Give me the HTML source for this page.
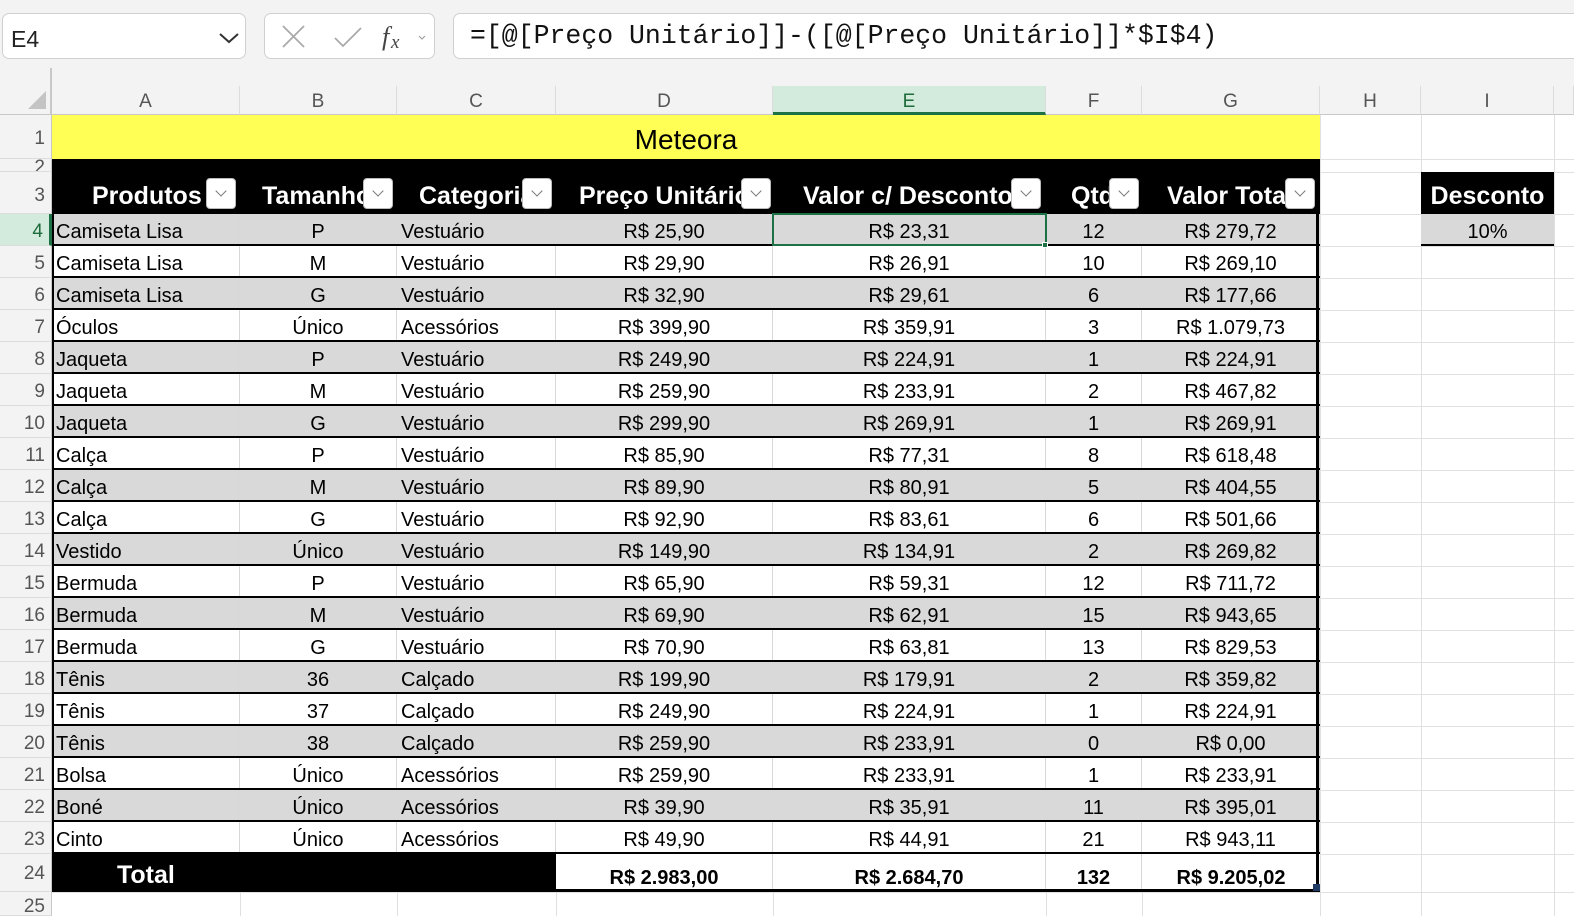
<!DOCTYPE html>
<html><head><meta charset="utf-8"><style>
*{margin:0;padding:0;box-sizing:border-box}
body{width:1574px;height:916px;background:#fff;position:relative;overflow:hidden;font-family:"Liberation Sans",sans-serif;color:#000}
.a{position:absolute}
.top{left:0;top:0;width:1574px;height:86px;background:#f3f3f3}
.box{background:#fff;border:1.5px solid #d0d0d0;border-radius:7px}
.colh{top:86px;height:29px;background:#f3f3f3;border-bottom:1px solid #c8c8c8;color:#555;font-size:19px;text-align:center;line-height:31px;border-right:1px solid #dcdcdc}
.rh{left:0;width:52px;background:#f3f3f3;color:#555;font-size:19px;text-align:right;padding-right:6px;border-bottom:1px solid #dcdcdc;border-right:1px solid #c8c8c8}
.vl{top:115px;width:1px;height:801px;background:#e0e0e0}
.hl{left:52px;width:1522px;height:1px;background:#e0e0e0}
.row{left:52px;width:1268px;height:32px;display:flex;font-size:20px;line-height:36px;border-bottom:2px solid #000}
.row div{white-space:nowrap;overflow:hidden;border-right:1px solid #d8d8d8}
.g{background:#d9d9d9}
.w{background:#fff}
.c1{width:188px;padding-left:4px}.c2{width:157px;text-align:center}.c3{width:159px;padding-left:4px}.c4{width:217px;text-align:center}.c5{width:273px;text-align:center}.c6{width:96px;text-align:center}.c7{width:178px;text-align:center}
.hd{color:#fff;font-weight:bold;font-size:25px;top:172px;height:42px;line-height:48px;white-space:nowrap;overflow:hidden;text-align:center}
.dd{top:178px;width:30px;height:31px;background:#fff;border-radius:4px;border:1px solid #bbb}
.dd:after{content:"";position:absolute;left:10px;top:8px;width:7px;height:7px;border-right:1.3px solid #777;border-bottom:1.3px solid #777;transform:rotate(45deg)}
</style></head><body>
<div class="a top"></div>
<div class="a box" style="left:2px;top:13px;width:244px;height:46px"></div>
<div class="a" style="left:11px;top:26px;font-size:23px;color:#222">E4</div>
<svg class="a" style="left:218px;top:31px" width="22" height="14"><path d="M2 3 L11 11 L20 3" fill="none" stroke="#333" stroke-width="2"/></svg>
<div class="a box" style="left:264px;top:13px;width:171px;height:46px"></div>
<svg class="a" style="left:280px;top:24px" width="150" height="28"><path d="M3 2 L24 23 M24 2 L3 23" stroke="#aaa" stroke-width="1.8" fill="none"/><path d="M55 14 L63 22 L81 4" stroke="#aaa" stroke-width="1.8" fill="none"/><text x="102" y="21" font-family="Liberation Serif" font-style="italic" font-size="26" fill="#444">f</text><text x="111" y="24" font-family="Liberation Serif" font-style="italic" font-size="19" fill="#444">x</text><path d="M139 12 L142 15 L145 12" stroke="#999" fill="none"/></svg>
<div class="a box" style="left:453px;top:13px;width:1130px;height:46px"></div>
<div class="a" style="left:470px;top:21px;font-family:'Liberation Mono',monospace;font-size:26.5px;color:#111">=[@[Preço Unitário]]-([@[Preço Unitário]]*$I$4)</div>
<div class="a" style="left:0;top:86px;width:52px;height:29px;background:#f3f3f3;border-right:1px solid #c8c8c8;border-bottom:1px solid #c8c8c8"></div>
<div class="a" style="left:50px;top:68px;width:2px;height:47px;background:#c8c8c8"></div>
<svg class="a" style="left:26px;top:90px" width="22" height="20"><path d="M20 1 L20 19 L2 19 Z" fill="#c4c4c4"/></svg>
<div class="a colh" style="left:52px;width:188px">A</div>
<div class="a colh" style="left:240px;width:157px">B</div>
<div class="a colh" style="left:397px;width:159px">C</div>
<div class="a colh" style="left:556px;width:217px">D</div>
<div class="a colh" style="left:773px;width:273px;background:#d3ebdc;color:#1e6b3c;border-bottom:3px solid #1e7145">E</div>
<div class="a colh" style="left:1046px;width:96px">F</div>
<div class="a colh" style="left:1142px;width:178px">G</div>
<div class="a colh" style="left:1320px;width:101px">H</div>
<div class="a colh" style="left:1421px;width:133px">I</div>
<div class="a colh" style="left:1554px;width:20px"></div>
<div class="a vl" style="left:1320px"></div><div class="a vl" style="left:1421px"></div><div class="a vl" style="left:1554px"></div>
<div class="a vl" style="left:240px"></div><div class="a vl" style="left:397px"></div><div class="a vl" style="left:556px"></div><div class="a vl" style="left:773px"></div><div class="a vl" style="left:1046px"></div><div class="a vl" style="left:1142px"></div>
<div class="a hl" style="top:159px"></div><div class="a hl" style="top:172px"></div><div class="a hl" style="top:214px"></div>
<div class="a hl" style="top:246px"></div><div class="a hl" style="top:278px"></div><div class="a hl" style="top:310px"></div><div class="a hl" style="top:342px"></div><div class="a hl" style="top:374px"></div><div class="a hl" style="top:406px"></div><div class="a hl" style="top:438px"></div><div class="a hl" style="top:470px"></div><div class="a hl" style="top:502px"></div><div class="a hl" style="top:534px"></div><div class="a hl" style="top:566px"></div><div class="a hl" style="top:598px"></div><div class="a hl" style="top:630px"></div><div class="a hl" style="top:662px"></div><div class="a hl" style="top:694px"></div><div class="a hl" style="top:726px"></div><div class="a hl" style="top:758px"></div><div class="a hl" style="top:790px"></div><div class="a hl" style="top:822px"></div><div class="a hl" style="top:854px"></div><div class="a hl" style="top:892px"></div>
<div class="a rh" style="top:115px;height:44px;line-height:48px">1</div>
<div class="a rh" style="top:159px;height:13px;line-height:18px;overflow:hidden">2</div>
<div class="a rh" style="top:172px;height:42px;line-height:48px">3</div>
<div class="a rh" style="top:214px;height:32px;line-height:36px;background:#d3ebdc;color:#1e6b3c;border-right:3px solid #1e7145">4</div>
<div class="a rh" style="top:246px;height:32px;line-height:36px">5</div>
<div class="a rh" style="top:278px;height:32px;line-height:36px">6</div>
<div class="a rh" style="top:310px;height:32px;line-height:36px">7</div>
<div class="a rh" style="top:342px;height:32px;line-height:36px">8</div>
<div class="a rh" style="top:374px;height:32px;line-height:36px">9</div>
<div class="a rh" style="top:406px;height:32px;line-height:36px">10</div>
<div class="a rh" style="top:438px;height:32px;line-height:36px">11</div>
<div class="a rh" style="top:470px;height:32px;line-height:36px">12</div>
<div class="a rh" style="top:502px;height:32px;line-height:36px">13</div>
<div class="a rh" style="top:534px;height:32px;line-height:36px">14</div>
<div class="a rh" style="top:566px;height:32px;line-height:36px">15</div>
<div class="a rh" style="top:598px;height:32px;line-height:36px">16</div>
<div class="a rh" style="top:630px;height:32px;line-height:36px">17</div>
<div class="a rh" style="top:662px;height:32px;line-height:36px">18</div>
<div class="a rh" style="top:694px;height:32px;line-height:36px">19</div>
<div class="a rh" style="top:726px;height:32px;line-height:36px">20</div>
<div class="a rh" style="top:758px;height:32px;line-height:36px">21</div>
<div class="a rh" style="top:790px;height:32px;line-height:36px">22</div>
<div class="a rh" style="top:822px;height:32px;line-height:36px">23</div>
<div class="a rh" style="top:854px;height:38px;line-height:40px">24</div>
<div class="a rh" style="top:892px;height:24px;line-height:30px">25</div>
<div class="a" style="left:52px;top:115px;width:1268px;height:44px;background:#ffff55;text-align:center;font-size:28px;line-height:49px">Meteora</div>
<div class="a" style="left:52px;top:159px;width:1268px;height:55px;background:#000"></div>
<div class="a hd" style="left:52px;width:188px;padding-left:40px;text-align:left">Produtos</div>
<div class="a hd" style="left:262px;width:108px;text-align:left">Tamanho</div>
<div class="a hd" style="left:419px;width:110px;text-align:left">Categoria</div>
<div class="a hd" style="left:579px;width:172px;text-align:left">Preço Unitário</div>
<div class="a hd" style="left:803px;width:213px;text-align:left">Valor c/ Desconto</div>
<div class="a hd" style="left:1071px;width:42px;text-align:left">Qtd</div>
<div class="a hd" style="left:1167px;width:122px;text-align:left">Valor Total</div>
<div class="a dd" style="left:206px"></div><div class="a dd" style="left:363px"></div><div class="a dd" style="left:522px"></div><div class="a dd" style="left:741px"></div><div class="a dd" style="left:1011px"></div><div class="a dd" style="left:1109px"></div><div class="a dd" style="left:1285px"></div>
<div class="a" style="left:1421px;top:172px;width:133px;height:42px;background:#000;color:#fff;font-weight:bold;font-size:25px;line-height:48px;text-align:center">Desconto</div>
<div class="a" style="left:1421px;top:214px;width:133px;height:32px;background:#d9d9d9;font-size:20px;line-height:36px;text-align:center;border-bottom:2px solid #000">10%</div>
<div class="a row g" style="top:214px"><div class="c1">Camiseta Lisa</div><div class="c2">P</div><div class="c3">Vestuário</div><div class="c4">R$ 25,90</div><div class="c5">R$ 23,31</div><div class="c6">12</div><div class="c7">R$ 279,72</div></div>
<div class="a row w" style="top:246px"><div class="c1">Camiseta Lisa</div><div class="c2">M</div><div class="c3">Vestuário</div><div class="c4">R$ 29,90</div><div class="c5">R$ 26,91</div><div class="c6">10</div><div class="c7">R$ 269,10</div></div>
<div class="a row g" style="top:278px"><div class="c1">Camiseta Lisa</div><div class="c2">G</div><div class="c3">Vestuário</div><div class="c4">R$ 32,90</div><div class="c5">R$ 29,61</div><div class="c6">6</div><div class="c7">R$ 177,66</div></div>
<div class="a row w" style="top:310px"><div class="c1">Óculos</div><div class="c2">Único</div><div class="c3">Acessórios</div><div class="c4">R$ 399,90</div><div class="c5">R$ 359,91</div><div class="c6">3</div><div class="c7">R$ 1.079,73</div></div>
<div class="a row g" style="top:342px"><div class="c1">Jaqueta</div><div class="c2">P</div><div class="c3">Vestuário</div><div class="c4">R$ 249,90</div><div class="c5">R$ 224,91</div><div class="c6">1</div><div class="c7">R$ 224,91</div></div>
<div class="a row w" style="top:374px"><div class="c1">Jaqueta</div><div class="c2">M</div><div class="c3">Vestuário</div><div class="c4">R$ 259,90</div><div class="c5">R$ 233,91</div><div class="c6">2</div><div class="c7">R$ 467,82</div></div>
<div class="a row g" style="top:406px"><div class="c1">Jaqueta</div><div class="c2">G</div><div class="c3">Vestuário</div><div class="c4">R$ 299,90</div><div class="c5">R$ 269,91</div><div class="c6">1</div><div class="c7">R$ 269,91</div></div>
<div class="a row w" style="top:438px"><div class="c1">Calça</div><div class="c2">P</div><div class="c3">Vestuário</div><div class="c4">R$ 85,90</div><div class="c5">R$ 77,31</div><div class="c6">8</div><div class="c7">R$ 618,48</div></div>
<div class="a row g" style="top:470px"><div class="c1">Calça</div><div class="c2">M</div><div class="c3">Vestuário</div><div class="c4">R$ 89,90</div><div class="c5">R$ 80,91</div><div class="c6">5</div><div class="c7">R$ 404,55</div></div>
<div class="a row w" style="top:502px"><div class="c1">Calça</div><div class="c2">G</div><div class="c3">Vestuário</div><div class="c4">R$ 92,90</div><div class="c5">R$ 83,61</div><div class="c6">6</div><div class="c7">R$ 501,66</div></div>
<div class="a row g" style="top:534px"><div class="c1">Vestido</div><div class="c2">Único</div><div class="c3">Vestuário</div><div class="c4">R$ 149,90</div><div class="c5">R$ 134,91</div><div class="c6">2</div><div class="c7">R$ 269,82</div></div>
<div class="a row w" style="top:566px"><div class="c1">Bermuda</div><div class="c2">P</div><div class="c3">Vestuário</div><div class="c4">R$ 65,90</div><div class="c5">R$ 59,31</div><div class="c6">12</div><div class="c7">R$ 711,72</div></div>
<div class="a row g" style="top:598px"><div class="c1">Bermuda</div><div class="c2">M</div><div class="c3">Vestuário</div><div class="c4">R$ 69,90</div><div class="c5">R$ 62,91</div><div class="c6">15</div><div class="c7">R$ 943,65</div></div>
<div class="a row w" style="top:630px"><div class="c1">Bermuda</div><div class="c2">G</div><div class="c3">Vestuário</div><div class="c4">R$ 70,90</div><div class="c5">R$ 63,81</div><div class="c6">13</div><div class="c7">R$ 829,53</div></div>
<div class="a row g" style="top:662px"><div class="c1">Tênis</div><div class="c2">36</div><div class="c3">Calçado</div><div class="c4">R$ 199,90</div><div class="c5">R$ 179,91</div><div class="c6">2</div><div class="c7">R$ 359,82</div></div>
<div class="a row w" style="top:694px"><div class="c1">Tênis</div><div class="c2">37</div><div class="c3">Calçado</div><div class="c4">R$ 249,90</div><div class="c5">R$ 224,91</div><div class="c6">1</div><div class="c7">R$ 224,91</div></div>
<div class="a row g" style="top:726px"><div class="c1">Tênis</div><div class="c2">38</div><div class="c3">Calçado</div><div class="c4">R$ 259,90</div><div class="c5">R$ 233,91</div><div class="c6">0</div><div class="c7">R$ 0,00</div></div>
<div class="a row w" style="top:758px"><div class="c1">Bolsa</div><div class="c2">Único</div><div class="c3">Acessórios</div><div class="c4">R$ 259,90</div><div class="c5">R$ 233,91</div><div class="c6">1</div><div class="c7">R$ 233,91</div></div>
<div class="a row g" style="top:790px"><div class="c1">Boné</div><div class="c2">Único</div><div class="c3">Acessórios</div><div class="c4">R$ 39,90</div><div class="c5">R$ 35,91</div><div class="c6">11</div><div class="c7">R$ 395,01</div></div>
<div class="a row w" style="top:822px"><div class="c1">Cinto</div><div class="c2">Único</div><div class="c3">Acessórios</div><div class="c4">R$ 49,90</div><div class="c5">R$ 44,91</div><div class="c6">21</div><div class="c7">R$ 943,11</div></div>
<div class="a" style="left:52px;top:852px;width:504px;height:40px;background:#000;color:#fff;font-weight:bold;font-size:25px;line-height:46px;padding-left:65px">Total</div>
<div class="a row w" style="top:854px;left:556px;width:764px;height:38px;border-bottom:3px solid #000;font-weight:bold;line-height:48px"><div class="c4">R$ 2.983,00</div><div class="c5">R$ 2.684,70</div><div class="c6">132</div><div class="c7" style="border:none">R$ 9.205,02</div></div>
<div class="a" style="left:1316px;top:172px;width:3px;height:720px;background:#000"></div>
<div class="a" style="left:1313px;top:884px;width:7px;height:7px;background:#1f3b63"></div>
<div class="a" style="left:52px;top:214px;width:2px;height:640px;background:#000"></div>
<div class="a" style="left:772px;top:213px;width:275px;height:33px;border:2px solid #1e7145"></div>
<div class="a" style="left:1042px;top:242px;width:6px;height:6px;background:#1e7145;border:1px solid #fff"></div>
</body></html>
